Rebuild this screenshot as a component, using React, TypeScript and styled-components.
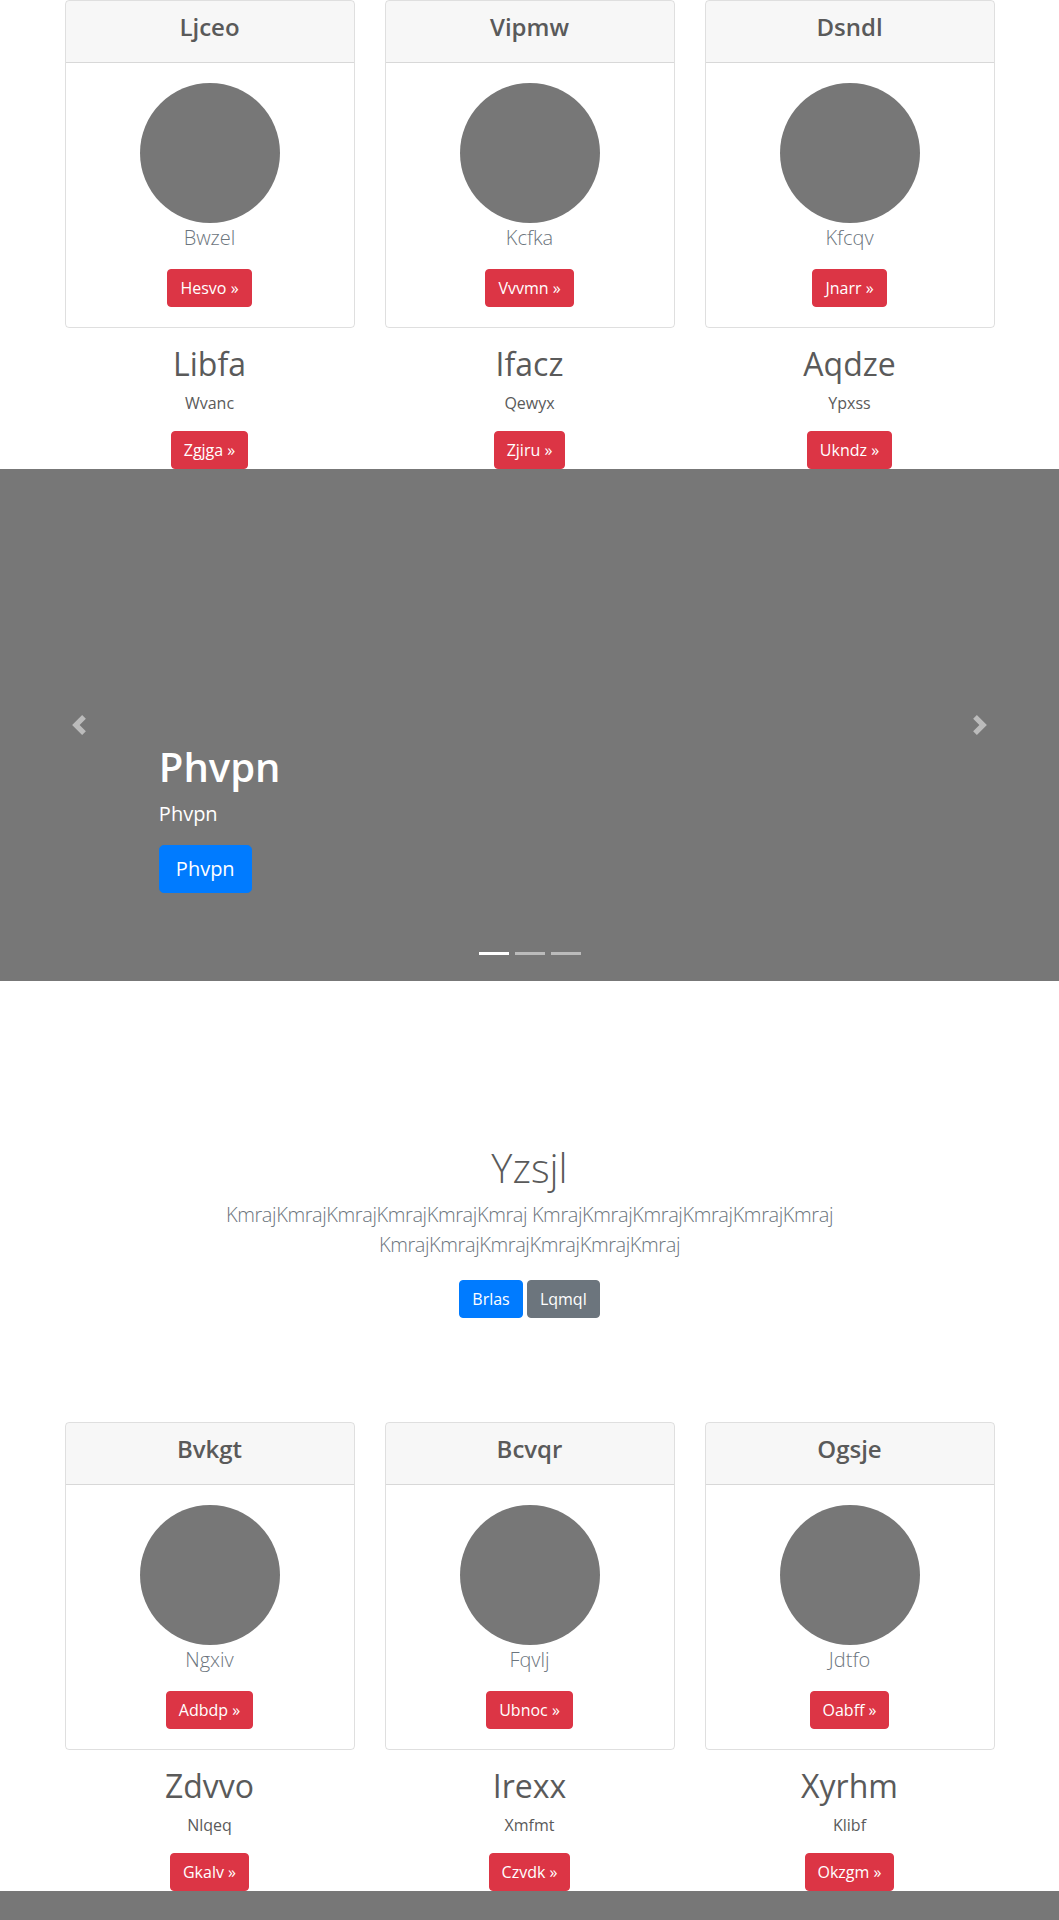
import { FC } from "react";
import styled, { createGlobalStyle } from "styled-components";

const GlobalStyle = createGlobalStyle`
  *, *::before, *::after { box-sizing: border-box; }
  body {
    margin: 0;
    font-family: "Open Sans", "Noto Sans", "Liberation Sans", sans-serif;
    font-size: 16px;
    line-height: 1.5;
    color: #5a5a5a;
    background: #fff;
  }
`;

interface Item {
    title: string;
    text: string;
    action: string;
}

interface Col {
    card: Item;
    marketing: Item;
}

const firstRow: Col[] = [
    { card: { title: "Ljceo", text: "Bwzel", action: "Hesvo" }, marketing: { title: "Libfa", text: "Wvanc", action: "Zgjga" } },
    { card: { title: "Vipmw", text: "Kcfka", action: "Vvvmn" }, marketing: { title: "Ifacz", text: "Qewyx", action: "Zjiru" } },
    { card: { title: "Dsndl", text: "Kfcqv", action: "Jnarr" }, marketing: { title: "Aqdze", text: "Ypxss", action: "Ukndz" } },
];

const secondRow: Col[] = [
    { card: { title: "Bvkgt", text: "Ngxiv", action: "Adbdp" }, marketing: { title: "Zdvvo", text: "Nlqeq", action: "Gkalv" } },
    { card: { title: "Bcvqr", text: "Fqvlj", action: "Ubnoc" }, marketing: { title: "Irexx", text: "Xmfmt", action: "Czvdk" } },
    { card: { title: "Ogsje", text: "Jdtfo", action: "Oabff" }, marketing: { title: "Xyrhm", text: "Klibf", action: "Okzgm" } },
];

const ColumnsBlock: FC<{ cols: Col[] }> = ({ cols }) => (
    <Container>
        <Row>
            {cols.map((c) => (
                <Column key={c.card.title}>
                    <Card>
                        <CardHeader>
                            <CardTitle>{c.card.title}</CardTitle>
                        </CardHeader>
                        <CardBody>
                            <Avatar />
                            <Lead>{c.card.text}</Lead>
                            <Button variant="danger">{c.card.action} &raquo;</Button>
                        </CardBody>
                    </Card>
                    <MarketingTitle>{c.marketing.title}</MarketingTitle>
                    <MarketingText>{c.marketing.text}</MarketingText>
                    <ButtonLine>
                        <Button variant="danger">{c.marketing.action} &raquo;</Button>
                    </ButtonLine>
                </Column>
            ))}
        </Row>
    </Container>
);

// caption is optional: the second slider only peeks in at the bottom of the page
const Carousel: FC<{ label?: string }> = ({ label }) => (
    <CarouselBox>
        <Control side="left">
            <svg width="20" height="20" viewBox="0 0 8 8" fill="#fff">
                <path d="M5.25 0l-4 4 4 4 1.5-1.5L4.25 4l2.5-2.5L5.25 0z" />
            </svg>
        </Control>
        {label && (
            <Caption>
                <CaptionTitle>{label}</CaptionTitle>
                <CaptionText>{label}</CaptionText>
                <CaptionAction>
                    <Button variant="primary" size="lg">{label}</Button>
                </CaptionAction>
            </Caption>
        )}
        <Control side="right">
            <svg width="20" height="20" viewBox="0 0 8 8" fill="#fff">
                <path d="M2.75 0l-1.5 1.5L3.75 4l-2.5 2.5L2.75 8l4-4-4-4z" />
            </svg>
        </Control>
        <Indicators>
            <Indicator active />
            <Indicator />
            <Indicator />
        </Indicators>
    </CarouselBox>
);

const App: FC = () => (
    <>
        <GlobalStyle />
        <ColumnsBlock cols={firstRow} />
        <Carousel label="Phvpn" />
        <Jumbotron>
            <JumboInner>
                <JumboTitle>Yzsjl</JumboTitle>
                <JumboLead>
                    KmrajKmrajKmrajKmrajKmrajKmraj KmrajKmrajKmrajKmrajKmrajKmraj KmrajKmrajKmrajKmrajKmrajKmraj
                </JumboLead>
                <ButtonLine>
                    <JumboButton variant="primary">Brlas</JumboButton>{" "}
                    <JumboButton variant="secondary">Lqmql</JumboButton>
                </ButtonLine>
            </JumboInner>
        </Jumbotron>
        <ColumnsBlock cols={secondRow} />
        <Carousel />
    </>
);

const colors = {
    danger: "#dc3545",
    primary: "#007bff",
    secondary: "#6c757d",
};

const Container = styled.div`
    max-width: 960px;
    margin: 0 auto;
    padding: 0 15px;
`

const Row = styled.div`
    display: grid;
    grid-template-columns: repeat(3, 1fr);
    column-gap: 30px;
`

const Column = styled.div`
    text-align: center;
`

const Card = styled.div`
    border: 1px solid rgba(0, 0, 0, 0.125);
    border-radius: 4px;
    margin-bottom: 17px;
    overflow: hidden;
`

const CardHeader = styled.div`
    padding: 12px 20px;
    background: rgba(0, 0, 0, 0.03);
    border-bottom: 1px solid rgba(0, 0, 0, 0.125);
`

const CardTitle = styled.h4`
    margin: 0 0 8px;
    font-size: 24px;
    font-weight: 600;
    line-height: 1.2;
`

const CardBody = styled.div`
    padding: 20px;
`

const Avatar = styled.div`
    width: 140px;
    height: 140px;
    margin: 0 auto;
    border-radius: 50%;
    background: #777;
`

const Lead = styled.p`
    margin: 0 0 16px;
    font-size: 20px;
    font-weight: 300;
    color: #6c757d;
`

const Button = styled.a<{ variant: keyof typeof colors; size?: "lg" }>`
    display: inline-block;
    padding: ${(p) => (p.size === "lg" ? "8px 16px" : "6px 12px")};
    font-size: ${(p) => (p.size === "lg" ? "20px" : "16px")};
    line-height: 1.5;
    border: 1px solid ${(p) => colors[p.variant]};
    border-radius: ${(p) => (p.size === "lg" ? "4.8px" : "4px")};
    background: ${(p) => colors[p.variant]};
    color: #fff;
    text-decoration: none;
    vertical-align: middle;
`

const ButtonLine = styled.div`
    margin: 0;
    line-height: 0;
`

const MarketingTitle = styled.h2`
    margin: 0 0 8px;
    font-size: 32px;
    font-weight: 500;
    line-height: 1.2;
`

const MarketingText = styled.p`
    margin: 0 12px 16px;
`

const CarouselBox = styled.div`
    position: relative;
    height: 512px;
    background: #777;
    overflow: hidden;
`

const Control = styled.div<{ side: "left" | "right" }>`
    position: absolute;
    top: 0;
    bottom: 0;
    ${(p) => p.side}: 0;
    width: 15%;
    display: flex;
    align-items: center;
    justify-content: center;
    opacity: 0.5;
`

const Caption = styled.div`
    position: absolute;
    left: 15%;
    right: 15%;
    bottom: 52px;
    padding: 20px 0;
    color: #fff;
    z-index: 10;
`

const CaptionTitle = styled.h1`
    margin: 0 0 8px;
    font-size: 40px;
    font-weight: 600;
    line-height: 1.2;
`

const CaptionText = styled.p`
    margin: 0 0 16px;
    font-size: 20px;
    line-height: 30px;
    font-weight: 500;
`

const CaptionAction = styled.div`
    margin-bottom: 16px;
    line-height: 0;
`

const Indicators = styled.ol`
    position: absolute;
    left: 0;
    right: 0;
    bottom: 0;
    margin: 0 0 16px;
    padding: 0;
    list-style: none;
    display: flex;
    justify-content: center;
`

const Indicator = styled.li<{ active?: boolean }>`
    box-sizing: content-box;
    width: 30px;
    height: 3px;
    margin: 0 3px;
    border-top: 10px solid transparent;
    border-bottom: 10px solid transparent;
    background: #fff;
    background-clip: padding-box;
    opacity: ${(p) => (p.active ? 1 : 0.5)};
`

const Jumbotron = styled.section`
    padding: 163px 0 96px;
    text-align: center;
`

const JumboInner = styled.div`
    max-width: 700px;
    margin: 0 auto;
    padding: 0 15px;
`

const JumboTitle = styled.h1`
    margin: 0 0 8px;
    font-size: 40px;
    font-weight: 300;
    line-height: 1.2;
`

const JumboLead = styled.p`
    margin: 0 0 12px;
    font-size: 20px;
    font-weight: 300;
    letter-spacing: -0.4px;
    color: #6c757d;
`

const JumboButton = styled(Button)`
    margin: 8px 0;
`

export default App;
